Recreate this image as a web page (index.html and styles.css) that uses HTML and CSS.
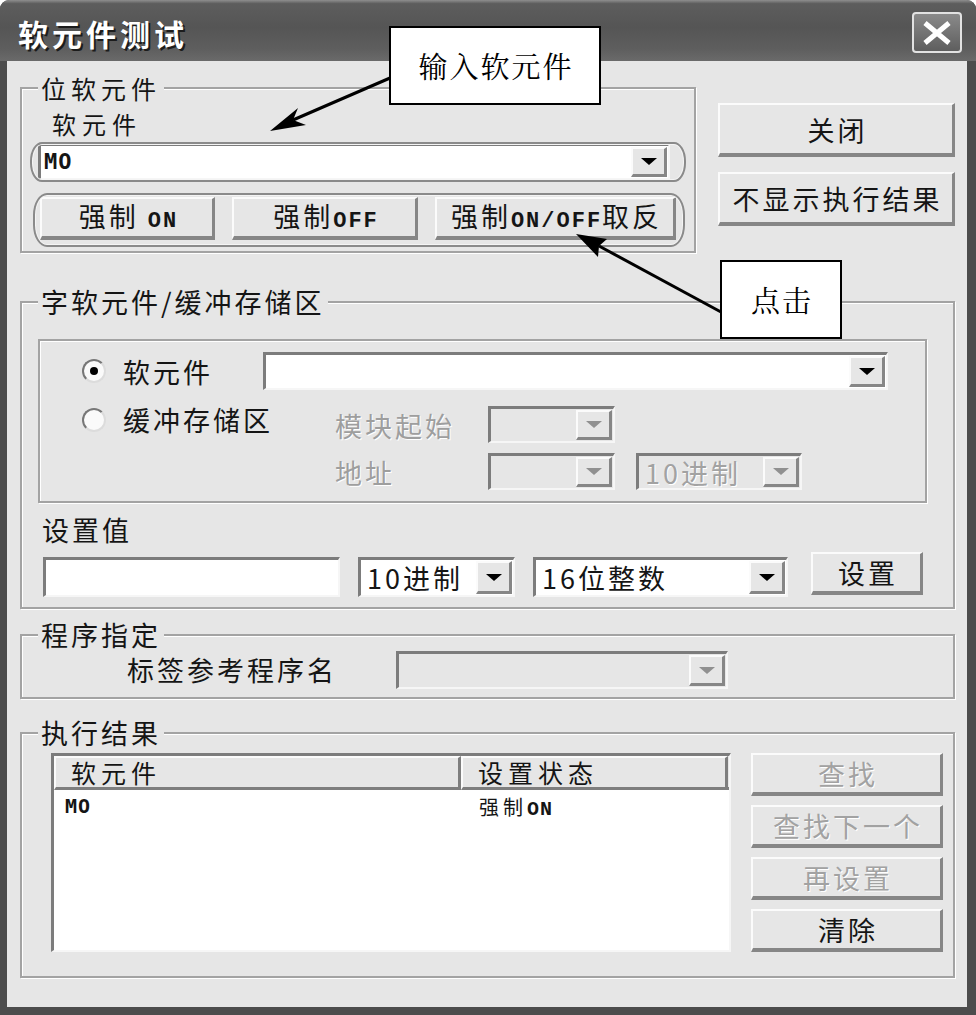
FILE: index.html
```html
<!DOCTYPE html>
<html lang="zh-CN">
<head>
<meta charset="utf-8">
<title>软元件测试</title>
<link rel="stylesheet" href="styles.css">
</head>
<body>
<div class="window">
  <div class="titlebar">
    <span class="title">软元件测试</span>
    <span class="close">
      <svg width="30" height="24" viewBox="0 0 30 24"><path d="M3 2 L27 22 M27 2 L3 22" stroke="#fff" stroke-width="5" fill="none"/></svg>
    </span>
  </div>
  <div class="client">
    <div class="top">
      <fieldset class="group g-bit">
        <legend>位软元件</legend>
        <div class="lbl bit-lbl">软元件</div>
        <div class="combo bit-combo"><span class="val mono-s">MO</span><span class="drop"><i class="tri"></i></span></div>
        <div class="force-row">
          <button class="btn b-on"><span>强制 <span class="mono">ON</span></span></button>
          <button class="btn b-off"><span>强制<span class="mono">OFF</span></span></button>
          <button class="btn b-toggle"><span>强制<span class="mono">ON/OFF</span>取反</span></button>
        </div>
      </fieldset>
      <div class="side">
        <button class="btn side-btn">关闭</button>
        <button class="btn side-btn">不显示执行结果</button>
      </div>
    </div>

    <fieldset class="group g-word">
      <legend>字软元件/缓冲存储区</legend>
      <div class="inner">
        <div class="row1">
          <div class="radio-item"><span class="radio checked"></span><span>软元件</span></div>
          <div class="combo dev-combo"><span class="val"></span><span class="drop"><i class="tri"></i></span></div>
        </div>
        <div class="row2">
          <div class="radio-item wide"><span class="radio"></span><span>缓冲存储区</span></div>
          <div class="buf-grid">
            <span class="dis-lbl">模块起始</span>
            <div class="combo disabled"><span class="val"></span><span class="drop"><i class="tri"></i></span></div>
            <span></span>
            <span class="dis-lbl">地址</span>
            <div class="combo disabled"><span class="val"></span><span class="drop"><i class="tri"></i></span></div>
            <div class="combo disabled"><span class="val">10进制</span><span class="drop"><i class="tri"></i></span></div>
          </div>
        </div>
      </div>
      <div class="lbl set-lbl">设置值</div>
      <div class="set-row">
        <div class="edit"></div>
        <div class="combo radix-combo"><span class="val">10进制</span><span class="drop"><i class="tri"></i></span></div>
        <div class="combo type-combo"><span class="val">16位整数</span><span class="drop"><i class="tri"></i></span></div>
        <button class="btn set-btn">设置</button>
      </div>
    </fieldset>

    <fieldset class="group g-prog">
      <legend>程序指定</legend>
      <div class="prog-row">
        <span class="lbl">标签参考程序名</span>
        <div class="combo disabled prog-combo"><span class="val"></span><span class="drop"><i class="tri"></i></span></div>
      </div>
    </fieldset>

    <fieldset class="group g-result">
      <legend>执行结果</legend>
      <div class="result-row">
        <div class="list">
          <div class="list-head">
            <span class="hcol c1">软元件</span>
            <span class="hcol c2">设置状态</span>
            <span class="hrest"></span>
          </div>
          <div class="list-row">
            <span class="cell c1 mono-s">MO</span>
            <span class="cell c2">强制<span class="mono">ON</span></span>
          </div>
        </div>
        <div class="result-btns">
          <button class="btn disabled">查找</button>
          <button class="btn disabled">查找下一个</button>
          <button class="btn disabled">再设置</button>
          <button class="btn">清除</button>
        </div>
      </div>
    </fieldset>
  </div>

  <div class="pill pill-combo"></div>
  <div class="pill pill-btns"></div>
  <svg class="arrows" width="976" height="1015" viewBox="0 0 976 1015">
    <line x1="390" y1="78" x2="293" y2="120" stroke="#000" stroke-width="3"/>
    <polygon points="270,131 298,108 293,120 306,125" fill="#000"/>
    <line x1="721" y1="312" x2="599" y2="246" stroke="#000" stroke-width="3"/>
    <polygon points="576,234 607,239 599,246 598,257" fill="#000"/>
  </svg>
  <div class="callout callout-input">输入软元件</div>
  <div class="callout callout-click">点击</div>
</div>
</body>
</html>
```

FILE: styles.css
```css
* { box-sizing: border-box; }
html, body { margin: 0; padding: 0; background: #fff; }
body {
  font-family: "Noto Sans CJK SC", "Noto Sans", sans-serif;
  font-size: 27px;
  letter-spacing: 3px;
  color: #151515;
}

.window {
  position: relative;
  width: 976px;
  height: 1015px;
  display: flex;
  flex-direction: column;
  background: #4c4c4c;
  border-radius: 9px 9px 0 0;
  overflow: hidden;
}

.titlebar {
  flex: none;
  height: 61px;
  display: flex;
  align-items: center;
  justify-content: space-between;
  padding: 4px 14px 0 18px;
  background: linear-gradient(180deg, #8e8e8e 0, #5d5d5d 6%, #555 45%, #5e5e5e 80%, #6a6a6a 100%);
}
.title {
  font-size: 30px;
  font-weight: 700;
  letter-spacing: 4px;
  line-height: 1;
  color: #fff;
  text-shadow: 2px 2px 0 #1c1c1c;
}
.close {
  width: 50px;
  height: 41px;
  display: flex;
  align-items: center;
  justify-content: center;
  border: 2px solid #e2e2e2;
  border-radius: 4px;
  background: linear-gradient(180deg, #8a8a8a, #5e5e5e);
}

.client {
  flex: 1;
  margin: 0 9px 8px 7px;
  background: #e6e6e6;
  padding: 12px 12px 0 13px;
}

/* group boxes */
.group {
  margin: 0;
  padding: 0;
  min-width: 0;
  border: 2px solid #a3a3a3;
  box-shadow: inset 1px 1px 0 #fff, 1px 1px 0 #fff;
}
.group legend {
  margin-left: 16px;
  padding: 0 3px;
  line-height: 30px;
  background: #e6e6e6;
}
.lbl { line-height: 30px; }

/* top section */
.top { display: flex; align-items: flex-start; }
.g-bit { width: 679px; padding-bottom: 11px; }
.g-bit legend { font-size: 25px; letter-spacing: 5px; }
.bit-lbl { margin: 6px 0 0 30px; font-size: 24px; letter-spacing: 6px; }
.bit-combo { margin: 4px 24px 0 16px; height: 37px; }
.force-row { display: flex; gap: 17px; margin: 17px 0 0 18px; }
.force-row .btn { height: 43px; }
.b-on { width: 175px; }
.b-off { width: 186px; }
.b-toggle { width: 241px; }

.side {
  flex: none;
  width: 237px;
  margin-left: 22px;
  padding-top: 30px;
  display: flex;
  flex-direction: column;
  gap: 15px;
}
.side-btn { height: 54px; }

/* buttons */
.btn {
  font: inherit;
  letter-spacing: 3px;
  color: #151515;
  background: #e6e6e6;
  border-style: solid;
  border-width: 2px 3px 4px 2px;
  border-color: #fbfbfb #868686 #868686 #fbfbfb;
  padding: 0 0 0 3px;
  margin: 0;
  line-height: 1;
  display: flex;
  align-items: center;
  justify-content: center;
  white-space: pre;
}
.btn.disabled { color: #a2a2a2; text-shadow: 1px 1px 0 #fff; }

.mono {
  font-family: "Liberation Mono", monospace;
  font-weight: 700;
  font-size: 22px;
  letter-spacing: 2px;
}
.mono-s {
  font-family: "DejaVu Sans Mono", monospace;
  font-weight: 700;
  font-size: 22px;
  letter-spacing: 1px;
}

/* combo boxes */
.combo {
  display: flex;
  background: #fff;
  border-style: solid;
  border-width: 3px 2px 2px 3px;
  border-color: #7c7c7c #f6f6f6 #f6f6f6 #7c7c7c;
}
.combo .val {
  flex: 1;
  display: flex;
  align-items: center;
  padding-left: 6px;
  line-height: 1;
}
.bit-combo .val { padding-left: 3px; }
.combo .drop {
  flex: none;
  width: 36px;
  margin: 1px;
  display: flex;
  align-items: center;
  justify-content: center;
  background: #e6e6e6;
  border-style: solid;
  border-width: 2px 3px 3px 2px;
  border-color: #fbfbfb #868686 #868686 #fbfbfb;
}
.tri {
  width: 0;
  height: 0;
  border-left: 8px solid transparent;
  border-right: 8px solid transparent;
  border-top: 7px solid #000;
}
.combo.disabled { background: #e6e6e6; }
.combo.disabled .val { color: #a2a2a2; text-shadow: 1px 1px 0 #fff; }
.combo.disabled .tri { border-top-color: #909090; }

/* word device group */
.g-word { margin-top: 34px; padding-bottom: 10px; }
.inner {
  margin: 22px 26px 0 16px;
  border: 2px solid #a3a3a3;
  box-shadow: inset 1px 1px 0 #fff, 1px 1px 0 #fff;
  padding: 11px 0 11px 42px;
}
.row1 { display: flex; align-items: center; }
.radio-item {
  flex: none;
  width: 181px;
  display: flex;
  align-items: center;
  gap: 17px;
  line-height: 27px;
}
.radio-item.wide { width: 253px; }
.radio {
  flex: none;
  width: 24px;
  height: 24px;
  border-radius: 50%;
  background: #fafafa;
  border: 2px solid;
  border-color: #777 #dcdcdc #dcdcdc #777;
  display: flex;
  align-items: center;
  justify-content: center;
}
.radio.checked::after {
  content: "";
  width: 8px;
  height: 8px;
  border-radius: 50%;
  background: #000;
}
.dev-combo { width: 625px; height: 38px; }
.row2 { display: flex; align-items: flex-start; margin-top: 16px; }
.buf-grid {
  display: grid;
  grid-template-columns: 132px 127px 166px;
  grid-auto-rows: 37px;
  column-gap: 21px;
  row-gap: 10px;
}
.dis-lbl {
  align-self: center;
  color: #9e9e9e;
  text-shadow: 1px 1px 0 #fff;
  line-height: 30px;
  padding-top: 3px;
}

.set-lbl { margin: 12px 0 0 20px; }
.set-row { display: flex; align-items: flex-start; margin: 12px 0 0 21px; }
.edit {
  width: 297px;
  height: 40px;
  background: #fff;
  border-style: solid;
  border-width: 3px 2px 2px 3px;
  border-color: #7c7c7c #f6f6f6 #f6f6f6 #7c7c7c;
}
.radix-combo { width: 157px; height: 40px; margin-left: 18px; }
.type-combo { width: 255px; height: 40px; margin-left: 18px; }
.set-btn { width: 112px; height: 43px; margin-left: 23px; margin-top: -5px; }

/* program group */
.g-prog { margin-top: 11px; padding-bottom: 8px; }
.prog-row { display: flex; align-items: center; margin: 1px 0 0 105px; }
.prog-combo { width: 332px; height: 38px; margin-left: 59px; }

/* result group */
.g-result { margin-top: 19px; padding-bottom: 24px; }
.result-row { display: flex; align-items: flex-start; margin: 5px 0 0 29px; }
.list {
  flex: none;
  width: 680px;
  height: 199px;
  background: #fff;
  border-style: solid;
  border-width: 3px 2px 2px 3px;
  border-color: #7c7c7c #f6f6f6 #f6f6f6 #7c7c7c;
}
.list-head {
  display: flex;
  height: 34px;
  background: #e6e6e6;
  font-size: 25px;
  letter-spacing: 5px;
}
.hcol {
  flex: none;
  border-style: solid;
  border-width: 2px 3px 3px 2px;
  border-color: #fbfbfb #7e7e7e #7e7e7e #fbfbfb;
  line-height: 29px;
  padding-left: 15px;
}
.hcol.c1 { width: 407px; }
.hcol.c2 { width: 267px; }
.hrest { flex: 1; border-bottom: 3px solid #7e7e7e; }
.list-row {
  display: flex;
  align-items: center;
  height: 26px;
  padding-top: 6px;
  font-size: 20px;
  letter-spacing: 4px;
}
.list-row .mono { font-size: 20px; letter-spacing: 1px; }
.list-row .mono-s { font-size: 20px; }
.cell.c1 { width: 407px; padding-left: 11px; }
.cell.c2 { padding-left: 18px; }
.result-btns {
  flex: none;
  width: 192px;
  margin-left: 20px;
  display: flex;
  flex-direction: column;
  gap: 9px;
}
.result-btns .btn { height: 43px; }

/* annotation overlays */
.pill {
  position: absolute;
  border: 2px solid #8a8a8a;
  box-shadow: inset 0 0 0 1px #f4f4f4;
  pointer-events: none;
}
.pill-combo { left: 30px; top: 142px; width: 656px; height: 40px; border-radius: 12px / 19px; }
.pill-btns { left: 33px; top: 193px; width: 652px; height: 54px; border-radius: 14px / 22px; }

.arrows { position: absolute; left: 0; top: 0; pointer-events: none; }

.callout {
  position: absolute;
  display: flex;
  align-items: center;
  justify-content: center;
  background: #fff;
  border: 2px solid #000;
  font-family: "Noto Serif CJK SC", "Noto Sans CJK SC", serif;
  font-size: 29px;
  letter-spacing: 2px;
  color: #000;
  padding-left: 2px;
}
.callout-input { left: 389px; top: 26px; width: 212px; height: 79px; }
.callout-click { left: 720px; top: 260px; width: 122px; height: 79px; }
```
